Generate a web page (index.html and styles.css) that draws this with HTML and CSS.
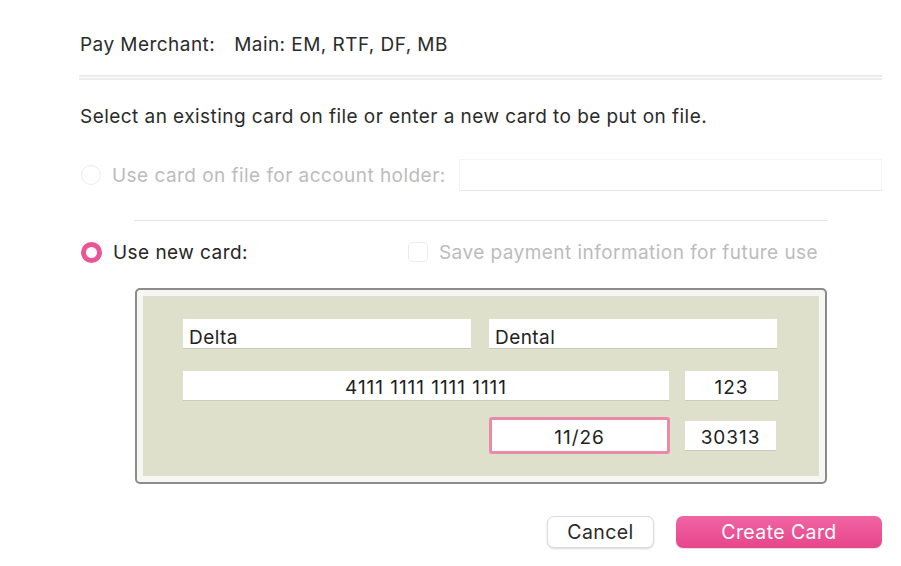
FILE: index.html
```html
<!DOCTYPE html>
<html>
<head>
<meta charset="utf-8">
<link rel="stylesheet" href="styles.css">
</head>
<body>
<div class="dialog">
  <div class="merchant"><span class="m-label">Pay Merchant:</span><span class="m-value">Main: EM, RTF, DF, MB</span></div>
  <div class="divider"></div>
  <p class="intro">Select an existing card on file or enter a new card to be put on file.</p>
  <div class="row row-file">
    <span class="radio"></span>
    <span class="label disabled">Use card on file for account holder:</span>
    <span class="file-input"></span>
  </div>
  <div class="sep"></div>
  <div class="row row-new">
    <span class="radio checked"></span>
    <span class="label">Use new card:</span>
    <span class="save">
      <span class="checkbox"></span>
      <span class="label disabled">Save payment information for future use</span>
    </span>
  </div>
  <div class="card-box">
    <div class="card-inner">
      <div class="frow">
        <span class="field w288 left">Delta</span>
        <span class="field w288 left">Dental</span>
      </div>
      <div class="frow">
        <span class="field w486 num">4111 1111 1111 1111</span>
        <span class="field w93 num">123</span>
      </div>
      <div class="frow r3">
        <span class="field w181 focus num">11/26</span>
        <span class="field w91 num">30313</span>
      </div>
    </div>
  </div>
  <div class="actions">
    <button class="btn cancel">Cancel</button>
    <button class="btn create">Create Card</button>
  </div>
</div>
</body>
</html>
```
FILE: styles.css
```css
html, body {
  margin: 0;
  padding: 0;
  background: #ffffff;
}
body {
  font-family: Inter, "Liberation Sans", Arial, sans-serif;
  color: #2b2b2b;
  font-size: 19px;
  letter-spacing: 0.45px;
}
.dialog {
  width: 901px;
  height: 566px;
  box-sizing: border-box;
  padding: 33px 19px 0 80px;
}
.merchant {
  height: 24px;
  line-height: 24px;
  display: flex;
  gap: 19px;
}
.divider {
  margin-top: 18px;
  height: 1px;
  border-top: 2px solid #ececec;
  border-bottom: 2px solid #ececec;
  margin-left: -1px;
}
.intro {
  margin: 25px 0 0 0;
  line-height: 24px;
  height: 24px;
}
.row {
  display: flex;
  align-items: center;
}
.row-file {
  margin-top: 29px;
  height: 34px;
}
.radio {
  width: 18px;
  height: 18px;
  border-radius: 50%;
  border: 1.5px solid #ececec;
  box-sizing: content-box;
  margin-left: 1px;
  flex: none;
  background: #fff;
}
.radio.checked {
  width: 11px;
  height: 11px;
  border: 5px solid #ea5597;
  background: #fff;
}
.label {
  margin-left: 11px;
  white-space: nowrap;
}
.label:not(.disabled) {
  color: #262626;
}
.disabled {
  color: #bcbcbc;
}
.file-input {
  margin-left: 13px;
  flex: 1;
  height: 32px;
  border: 1px solid #f5f5f5;
  border-bottom: 1.5px solid #e6e6e6;
  box-sizing: border-box;
}
.sep {
  margin: 28px 54px 0 54px;
  height: 0;
  border-top: 1.5px solid #e4e4e4;
}
.row-new {
  margin-top: 19px;
  height: 24px;
}
.save {
  display: flex;
  align-items: center;
  margin-left: 160px;
}
.save .label {
  margin-left: 11px;
}
.checkbox {
  width: 20px;
  height: 20px;
  border: 1.5px solid #ececec;
  border-radius: 4px;
  box-sizing: border-box;
  display: inline-block;
}
.card-box {
  margin: 24px 0 0 55px;
  width: 692px;
  height: 196px;
  box-sizing: border-box;
  border: 2px solid #8c8c8c;
  border-radius: 5px;
  padding: 6px;
  background: #f6f6f2;
}
.card-inner {
  height: 100%;
  box-sizing: border-box;
  background: #dfe0cb;
  padding: 23px 0 0 40px;
  display: flex;
  flex-direction: column;
  gap: 22px;
}
.frow {
  display: flex;
  gap: 18px;
  height: 30px;
}
.frow:nth-child(2) {
  gap: 16px;
}
.frow.r3 {
  margin-top: -6px;
  padding-left: 306px;
  gap: 15px;
  align-items: center;
  height: 37px;
}
.field {
  background: #fff;
  height: 30px;
  line-height: 33px;
  box-sizing: border-box;
  text-align: center;
  color: #222;
  border-bottom: 1.5px solid #c9c9c0;
  flex: none;
}
.field.num {
  letter-spacing: 0.95px;
}
.field.left {
  text-align: left;
  padding-left: 6px;
  line-height: 37px;
}
.w288 { width: 288px; }
.w486 { width: 486px; }
.w93 { width: 93px; }
.w181 { width: 181px; }
.w91 { width: 91px; }
.field.focus {
  height: 37px;
  line-height: 35px;
  border: 3px solid #e88aa8;
  border-radius: 3px;
}
.actions {
  display: flex;
  justify-content: flex-end;
  gap: 22px;
  margin-top: 32px;
}
.btn {
  font-family: Inter, "Liberation Sans", Arial, sans-serif;
  font-size: 19.5px;
  letter-spacing: 0.4px;
  height: 32px;
  border-radius: 7px;
  box-sizing: border-box;
  padding: 0;
  cursor: pointer;
}
.cancel {
  width: 107px;
  background: #fff;
  color: #2a2a2a;
  border: 1px solid #dcdcdc;
  box-shadow: 0 1px 2px rgba(0,0,0,0.15);
}
.create {
  width: 206px;
  border: none;
  color: #fff;
  background: linear-gradient(#f065a3, #e8458b);
  box-shadow: 0 1px 1px rgba(0,0,0,0.12);
}
```
